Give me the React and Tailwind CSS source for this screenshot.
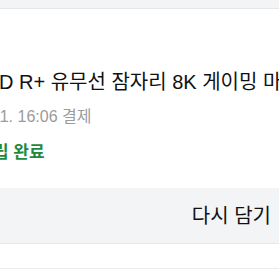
export default function App() {
  const font = { fontFamily: '"Liberation Sans", "Noto Sans CJK KR", sans-serif' };
  return (
    <div className="w-[279px] h-[279px] overflow-hidden bg-white" style={font}>
      <div className="h-[9px] bg-[#f3f4f6] border-b border-[#e6e7e9]" />
      <div className="pt-[61px] whitespace-nowrap overflow-hidden">
        <div className="ml-[-1px] text-[20px] leading-[24px] text-[#111111]">
          D R+ 유무선 잠자리 8K 게이밍 마우스
        </div>
        <div className="mt-[13px] ml-[-8px] text-[16px] leading-[20px] text-[#9b9b9b]">
          11. 16:06 결제
        </div>
        <div className="mt-[15px] ml-[-7px] text-[17px] leading-[22px] font-bold text-[#1f8a3f]">
          립 완료
        </div>
      </div>
      <div className="mt-[24px] h-[56px] bg-[#f3f4f6] border-b border-[#e6e7e9] flex items-center justify-end pr-[8px]">
        <span className="text-[20px] leading-[24px] text-[#111111]">다시 담기</span>
      </div>
      <div className="h-[25px] border-b border-[#ebebeb]" />
    </div>
  );
}
